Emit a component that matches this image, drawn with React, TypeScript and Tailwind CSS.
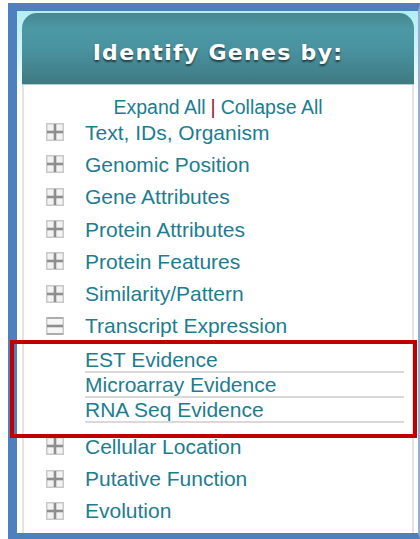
import React from "react";

const sans = { fontFamily: '"Liberation Sans", Arial, sans-serif' };

const topics = [
  "Text, IDs, Organism",
  "Genomic Position",
  "Gene Attributes",
  "Protein Attributes",
  "Protein Features",
  "Similarity/Pattern",
];

const expanded = "Transcript Expression";
const subTopics = ["EST Evidence", "Microarray Evidence", "RNA Seq Evidence"];
const trailing = ["Cellular Location", "Putative Function", "Evolution"];

function PlusBox() {
  return (
    <svg width="18" height="18" viewBox="0 0 18 18" className="shrink-0">
      <rect x="0.75" y="0.75" width="16.5" height="16.5" fill="#f3f3f3" stroke="#c8c8c8" strokeWidth="1.5" />
      <line x1="1" y1="9" x2="17" y2="9" stroke="#8e8e8e" strokeWidth="2.6" />
      <line x1="9" y1="1" x2="9" y2="17" stroke="#8e8e8e" strokeWidth="2.6" />
    </svg>
  );
}

function MinusBox() {
  return (
    <svg width="18" height="18" viewBox="0 0 18 18" className="shrink-0">
      <rect x="0.75" y="0.75" width="16.5" height="16.5" fill="#f6f6f6" stroke="#c8c8c8" strokeWidth="1.5" />
      <line x1="1" y1="1" x2="17" y2="1" stroke="#a8a8a8" strokeWidth="1.8" />
      <line x1="1" y1="17" x2="17" y2="17" stroke="#a8a8a8" strokeWidth="1.8" />
      <line x1="1" y1="9" x2="17" y2="9" stroke="#8e8e8e" strokeWidth="2.6" />
    </svg>
  );
}

function Row({ label, open }: { label: string; open?: boolean }) {
  return (
    <div className="flex h-[32.3px] items-center gap-[21px] pl-[22px]">
      {open ? <MinusBox /> : <PlusBox />}
      <span className="text-[21px] leading-none text-[#1c7d90]">{label}</span>
    </div>
  );
}

export default function App() {
  return (
    <div className="relative h-[539px] w-[420px] overflow-hidden bg-white pl-2 pt-[3px]" style={sans}>
      <div className="flex h-[536px] flex-col border-b-[6px] border-l-[9px] border-r-2 border-t-[8px] border-[#4e7fbe] border-r-[#93acd6] bg-[linear-gradient(180deg,#b2eef3_0px,#d6f5f7_45px,#ffffff_85px)] pl-[5px] pr-[4px] pt-[2px]">
        {/* Panel title bar */}
        <div className="flex h-[71px] shrink-0 items-center justify-center rounded-t-[15px] bg-[linear-gradient(180deg,#45888f_0%,#4c98a4_22%,#4993a0_50%,#3e7a82_100%)] pt-[7px]">
          <span
            className="text-[22px] font-bold tracking-[1.3px] text-white [text-shadow:0_2px_2px_rgba(0,0,0,0.55)]"
            style={{ fontFamily: '"DejaVu Sans", Verdana, sans-serif' }}
          >
            Identify Genes by:
          </span>
        </div>
        <div className="h-px shrink-0 bg-[#b7cdd1]" />

        {/* Topic tree */}
        <div className="flex-1 border-l-2 border-r-2 border-[#e4e4e4] bg-white pt-[15px]">
          <div className="flex h-[16px] items-center justify-center text-[19.5px] leading-none text-[#1c7d90]">
            <span>Expand All</span>
            <span className="px-[5px] text-[#8a1c2a]">|</span>
            <span>Collapse All</span>
          </div>

          {topics.map((t) => (
            <Row key={t} label={t} />
          ))}
          <Row label={expanded} open />

          <div className="ml-[61px] mr-[8px] mt-[6px] mb-[7px]">
            {subTopics.map((s) => (
              <div
                key={s}
                className="flex h-[25px] items-center border-b-2 border-[#d9d9d9] pb-px text-[21px] leading-none text-[#1c7d90]"
              >
                {s}
              </div>
            ))}
          </div>

          {trailing.map((t) => (
            <Row key={t} label={t} />
          ))}
        </div>
      </div>

      {/* Highlight frame around the expanded group */}
      <div className="pointer-events-none absolute left-[10px] top-[340px] h-[98px] w-[407px] border-4 border-[#c00000]" />
    </div>
  );
}
